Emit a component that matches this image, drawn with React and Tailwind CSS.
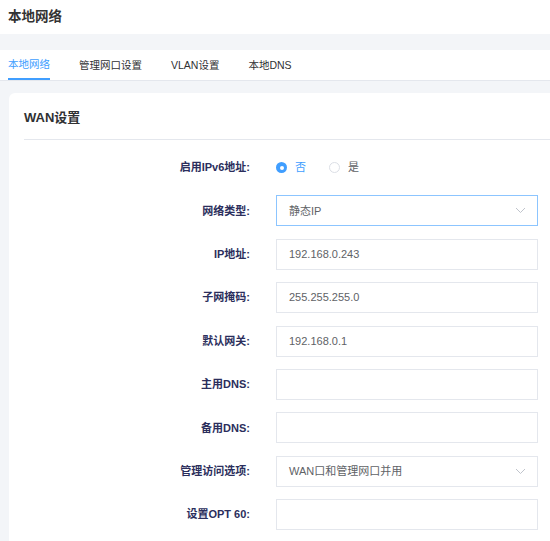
import { useState } from "react";

const font = {
  fontFamily: '"Liberation Sans", Arial, "Noto Sans CJK SC", sans-serif',
};

const tabs = ["本地网络", "管理网口设置", "VLAN设置", "本地DNS"];

const fields = [
  { label: "网络类型:", type: "select", value: "静态IP", focused: true },
  { label: "IP地址:", type: "input", value: "192.168.0.243" },
  { label: "子网掩码:", type: "input", value: "255.255.255.0" },
  { label: "默认网关:", type: "input", value: "192.168.0.1" },
  { label: "主用DNS:", type: "input", value: "" },
  { label: "备用DNS:", type: "input", value: "" },
  { label: "管理访问选项:", type: "select", value: "WAN口和管理网口并用" },
  { label: "设置OPT 60:", type: "input", value: "" },
];

const Chevron = () => (
  <svg width="11" height="7" viewBox="0 0 11 7" fill="none">
    <path d="M1 1l4.5 4.5L10 1" stroke="#c0c4cc" strokeWidth="1" />
  </svg>
);

const Label = ({ children }) => (
  <div className="w-[226px] shrink-0 text-right text-[11px] font-bold text-[#2b2e5c]">
    {children}
  </div>
);

const Radio = ({ checked, label, onClick }) => (
  <button className="flex items-center gap-2" onClick={onClick}>
    {checked ? (
      <span className="w-[11px] h-[11px] rounded-full bg-[#409eff] flex items-center justify-center">
        <span className="w-1 h-1 rounded-full bg-white" />
      </span>
    ) : (
      <span className="w-[11px] h-[11px] rounded-full border border-[#dcdfe6]" />
    )}
    <span className={checked ? "text-[#409eff]" : "text-[#606266]"}>{label}</span>
  </button>
);

const App = () => {
  const [ipv6, setIpv6] = useState("no");

  return (
    <div className="w-[550px] h-[541px] overflow-hidden bg-[#f3f5f8] flex flex-col" style={font}>
      {/* page title */}
      <div className="h-[34px] shrink-0 bg-white px-2 flex items-center">
        <h1 className="text-[13.5px] font-bold text-[#333]">本地网络</h1>
      </div>

      {/* tabs */}
      <div className="mt-4 h-[31px] shrink-0 bg-white border-b border-[#e4e7ed] flex px-2 gap-[29px]">
        {tabs.map((t, i) => (
          <div
            key={t}
            className={
              i === 0
                ? "h-full pt-[2px] flex items-center text-[10.5px] text-[#409eff] border-b-2 border-[#409eff] -mb-px"
                : "h-full pt-[2px] flex items-center text-[10.5px] text-[#303133]"
            }
          >
            {t}
          </div>
        ))}
      </div>

      {/* card */}
      <div className="mt-3 ml-[9px] w-[600px] grow bg-white rounded-t-md pt-[15px] px-[15px]">
        <h2 className="h-5 flex items-center text-[13px] font-bold text-[#303133]">
          WAN设置
        </h2>
        <div className="mt-[11px] border-t border-[#e4e7ed]" />

        <div className="pt-3 flex flex-col gap-[12.4px]">
          {/* IPv6 radio row */}
          <div className="h-[31px] flex items-center">
            <Label>启用IPv6地址:</Label>
            <div className="ml-[26px] flex items-center gap-[23px] text-[11px]">
              <Radio checked={ipv6 === "no"} label="否" onClick={() => setIpv6("no")} />
              <Radio checked={ipv6 === "yes"} label="是" onClick={() => setIpv6("yes")} />
            </div>
          </div>

          {fields.map((f) => (
            <div key={f.label} className="h-[31px] flex items-center">
              <Label>{f.label}</Label>
              <div
                className={
                  f.focused
                    ? "ml-[26px] w-[262px] h-[31px] border border-[#8cc5ff] flex items-center justify-between pl-3 pr-[11px] text-[11px] text-[#606266]"
                    : "ml-[26px] w-[262px] h-[31px] border border-[#e4e7ed] flex items-center justify-between pl-3 pr-[11px] text-[11px] text-[#606266]"
                }
              >
                <span>{f.value}</span>
                {f.type === "select" && <Chevron />}
              </div>
            </div>
          ))}
        </div>
      </div>
    </div>
  );
};

export default App;
